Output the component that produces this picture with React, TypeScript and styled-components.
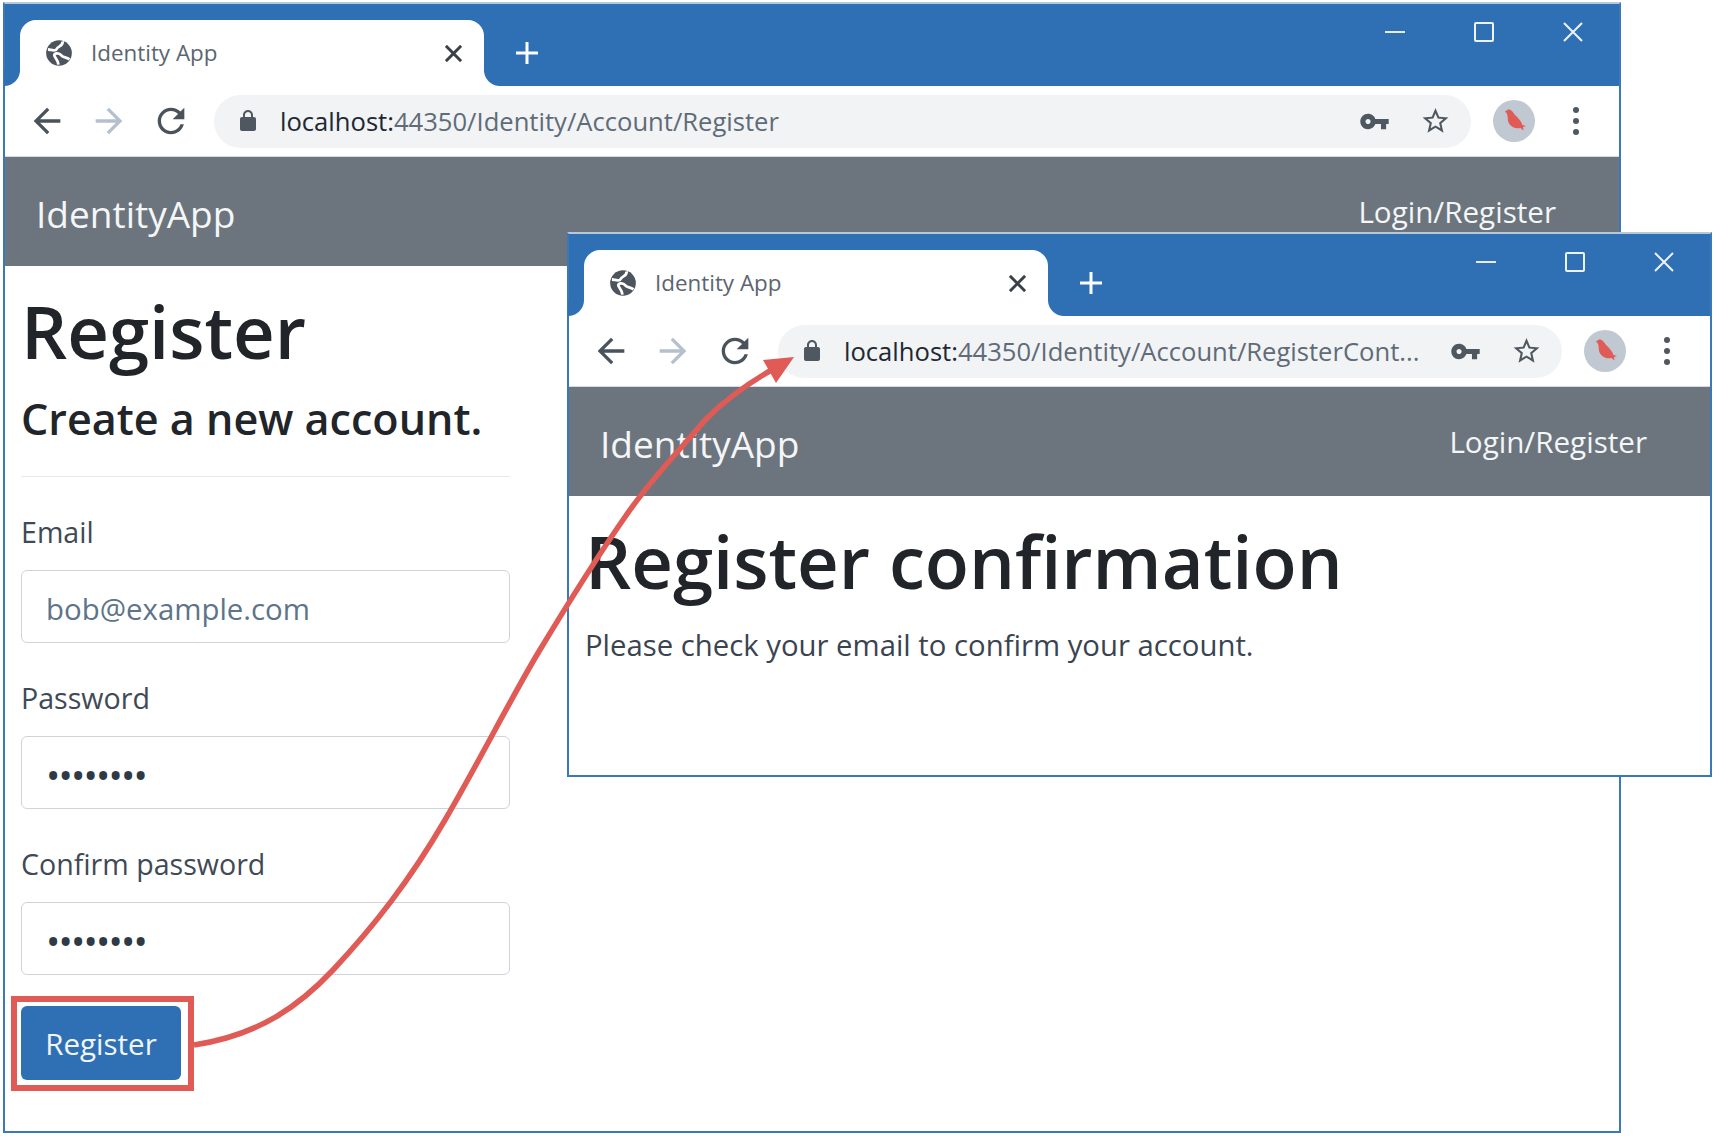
import React from "react";
import styled, { createGlobalStyle } from "styled-components";

const GlobalStyle = createGlobalStyle`
  html, body {
    margin: 0;
    padding: 0;
    background: #fff;
  }
  body {
    font-family: "Open Sans", "Noto Sans", sans-serif;
    color: #212529;
  }
`;

const BLUE = "#2f70b4";
const RED = "#e05b56";

const ICONS = {
  back: "M20 11H7.83l5.59-5.59L12 4l-8 8 8 8 1.41-1.41L7.83 13H20v-2z",
  forward: "M12 4l-1.41 1.41L16.17 11H4v2h12.17l-5.58 5.59L12 20l8-8z",
  reload:
    "M17.65 6.35C16.2 4.9 14.21 4 12 4c-4.42 0-7.99 3.58-7.99 8s3.57 8 7.99 8c3.73 0 6.84-2.55 7.73-6h-2.08c-.82 2.33-3.04 4-5.65 4-3.31 0-6-2.69-6-6s2.69-6 6-6c1.66 0 3.14.69 4.22 1.78L13 11h7V4l-2.35 2.35z",
  lock: "M18 8h-1V6c0-2.76-2.24-5-5-5S7 3.24 7 6v2H6c-1.1 0-2 .9-2 2v10c0 1.1.9 2 2 2h12c1.1 0 2-.9 2-2V10c0-1.1-.9-2-2-2zM9 6c0-1.66 1.34-3 3-3s3 1.34 3 3v2H9V6z",
  key: "M12.65 10C11.83 7.67 9.61 6 7 6c-3.31 0-6 2.69-6 6s2.69 6 6 6c2.61 0 4.83-1.67 5.65-4H17v4h4v-4h2v-4H12.65zM7 14c-1.1 0-2-.9-2-2s.9-2 2-2 2 .9 2 2-.9 2-2 2z",
  star: "M22 9.24l-7.19-.62L12 2 9.19 8.63 2 9.24l5.46 4.73L5.82 21 12 17.27 18.18 21l-1.63-7.03L22 9.24zM12 15.4l-3.76 2.27 1-4.28-3.32-2.88 4.38-.38L12 6.1l1.71 4.04 4.38.38-3.32 2.88 1 4.28L12 15.4z",
};

const Icon = ({ name, size, color }: { name: keyof typeof ICONS; size: number; color: string }) => (
  <svg width={size} height={size} viewBox="0 0 24 24" fill={color}>
    <path d={ICONS[name]} />
  </svg>
);

const Desktop = styled.div`
  position: relative;
  width: 1714px;
  height: 1136px;
  overflow: hidden;
  background: #fff;
`;

const Frame = styled.div<{ $left: number; $top: number; $width: number; $height: number }>`
  position: absolute;
  left: ${p => p.$left}px;
  top: ${p => p.$top}px;
  width: ${p => p.$width}px;
  height: ${p => p.$height}px;
  box-sizing: border-box;
  display: flex;
  flex-direction: column;
  background: #fff;
  border: 2px solid #3b78b8;
  border-top-color: #b9c8d9;
`;

const TitleBar = styled.div`
  flex: none;
  height: 82px;
  display: flex;
  padding: 0 2px 0 15px;
  background: ${BLUE};
`;

const Tab = styled.div`
  position: relative;
  align-self: flex-end;
  box-sizing: border-box;
  width: 464px;
  height: 66px;
  display: flex;
  align-items: center;
  gap: 18px;
  padding: 0 22px 0 25px;
  background: #fff;
  border-radius: 16px 16px 0 0;

  &::before,
  &::after {
    content: "";
    position: absolute;
    bottom: 0;
    width: 16px;
    height: 16px;
  }
  &::before {
    left: -16px;
    background: radial-gradient(circle at 0 0, ${BLUE} 15.5px, #fff 16.5px);
  }
  &::after {
    right: -16px;
    background: radial-gradient(circle at 100% 0, ${BLUE} 15.5px, #fff 16.5px);
  }
`;

const TabTitle = styled.span`
  flex: 1;
  padding-bottom: 2px;
  font-size: 22.4px;
  color: #5b6570;
  white-space: nowrap;
`;

const NewTab = styled.div`
  align-self: flex-end;
  width: 44px;
  height: 66px;
  margin-left: 21px;
  display: flex;
  align-items: center;
  justify-content: center;
`;

const WindowControls = styled.div`
  display: flex;
  margin-left: auto;
  align-self: flex-start;
`;

const WindowControl = styled.div`
  width: 89px;
  height: 56px;
  display: flex;
  align-items: center;
  justify-content: center;
`;

const Toolbar = styled.div`
  flex: none;
  height: 71px;
  box-sizing: border-box;
  display: flex;
  align-items: center;
  padding: 0 12px 0 11px;
  background: #fff;
  border-bottom: 1px solid #d5dbe2;
`;

const ToolButton = styled.div`
  flex: none;
  width: 62px;
  height: 62px;
  display: flex;
  align-items: center;
  justify-content: center;
`;

const Omnibox = styled.div`
  flex: 1;
  min-width: 0;
  height: 53px;
  margin: 0 12px 0 12px;
  box-sizing: border-box;
  display: flex;
  align-items: center;
  padding: 0 20px 0 22px;
  background: #f1f3f4;
  border-radius: 27px;
`;

const Url = styled.div`
  flex: 1;
  min-width: 0;
  margin-left: 20px;
  font-size: 25.6px;
  color: #5f6b78;
  white-space: nowrap;
`;

const UrlHost = styled.span`
  color: #202833;
`;

const OmniAction = styled.div`
  flex: none;
  width: 31px;
  margin-left: 30px;
  display: flex;
  justify-content: center;
`;

const Avatar = styled.div`
  width: 42px;
  height: 42px;
  border-radius: 50%;
  background: #c0c8d2;
  display: flex;
  align-items: center;
  justify-content: center;
`;

const MenuDots = styled.div`
  display: flex;
  flex-direction: column;
  gap: 5px;

  i {
    display: block;
    width: 6px;
    height: 6px;
    border-radius: 50%;
    background: #4f5761;
  }
`;

const NavBar = styled.div`
  flex: none;
  height: 109px;
  box-sizing: border-box;
  display: flex;
  align-items: center;
  justify-content: space-between;
  padding: 0 63px 0 31px;
  background: #6c757d;
  color: #f4f6f8;
`;

const Brand = styled.div`
  font-size: 37px;
  padding-top: 3px;
`;

const NavLink = styled.div`
  font-size: 29.6px;
`;

const Content = styled.div`
  flex: 1;
  padding: 0 16px;
  min-height: 0;
`;

const Heading = styled.h1`
  margin: 25px 0 0;
  font-size: 72.4px;
  line-height: 80px;
  font-weight: 600;
  color: #212529;
`;

const SubHeading = styled.h4`
  margin: 23px 0 0;
  font-size: 43.1px;
  line-height: 50px;
  font-weight: 600;
  color: #212529;
`;

const Rule = styled.hr`
  width: 489px;
  margin: 32px 0 35px;
  border: 0;
  border-top: 1px solid #e6e8ea;
`;

const Form = styled.form`
  width: 489px;
  display: flex;
  flex-direction: column;
`;

const Label = styled.label`
  display: block;
  margin-top: 35px;
  font-size: 28.6px;
  line-height: 40px;
  color: #3f4a56;

  &:first-child {
    margin-top: 0;
  }
`;

const Field = styled.input<{ $mask?: boolean }>`
  display: block;
  box-sizing: border-box;
  width: 489px;
  height: 73px;
  margin-top: 18px;
  padding: 4px 24px 0;
  font-family: inherit;
  font-size: ${p => (p.$mask ? 38 : 29.4)}px;
  letter-spacing: ${p => (p.$mask ? -1.8 : 0)}px;
  color: ${p => (p.$mask ? "#2f3a47" : "#5d7489")};
  background: #fff;
  border: 1.5px solid #ced4da;
  border-radius: 6px;
  outline: 0;
`;

const SubmitWrap = styled.div`
  position: relative;
  align-self: flex-start;
  margin-top: 31px;

  &::after {
    content: "";
    position: absolute;
    left: -10px;
    top: -10px;
    right: -13px;
    bottom: -11px;
    border: 6px solid ${RED};
  }
`;

const SubmitButton = styled.button`
  display: block;
  width: 160px;
  height: 74px;
  border: 0;
  border-radius: 6px;
  font-family: inherit;
  font-size: 29.5px;
  color: #f2f5f8;
  background: ${BLUE};
`;

const Message = styled.p`
  margin: 24px 0 0;
  font-size: 29.3px;
  line-height: 40px;
  color: #3a4450;
`;

const Overlay = styled.svg`
  position: absolute;
  left: 0;
  top: 0;
  pointer-events: none;
`;

const Favicon = () => (
  <svg width={28} height={28} viewBox="0 0 24 24" style={{ flex: "none" }}>
    <circle cx="12" cy="12" r="11" fill="#4d545e" />
    <path
      d="M15 2C16 6 11 6 10 8.5S5 9 2.500 9M21 17.500C18 15 16 16.500 14 14S8 12 8 14s3 3 3.500 8"
      fill="none"
      stroke="#fff"
      strokeWidth="2.400"
    />
  </svg>
);

const CloseGlyph = ({ size, stroke, weight }: { size: number; stroke: string; weight: number }) => (
  <svg width={size} height={size} viewBox="0 0 20 20" style={{ flex: "none" }}>
    <path d="M1 1L19 19M19 1L1 19" stroke={stroke} strokeWidth={weight} fill="none" />
  </svg>
);

const Bird = () => (
  <svg width={28} height={28} viewBox="0 0 28 28">
    <path
      d="M5 4.500L8 2.500C11 2 13 5 15 8C18 10.500 21 14 22.500 18L26 19L23 20L23.500 23.500L20.500 21C15 22.500 9.500 19 8 14C7.500 11 8 8 6.500 6Z"
      fill={RED}
    />
  </svg>
);

interface BrowserWindowProps {
  left: number;
  top: number;
  width: number;
  height: number;
  url: string;
  children: React.ReactNode;
}

const BrowserWindow: React.FunctionComponent<BrowserWindowProps> = props => {
  const host = "localhost:";
  return (
    <Frame $left={props.left} $top={props.top} $width={props.width} $height={props.height}>
      <TitleBar>
        <Tab>
          <Favicon />
          <TabTitle>Identity App</TabTitle>
          <CloseGlyph size={17} stroke="#3a4048" weight={3.5} />
        </Tab>
        <NewTab>
          <svg width={24} height={24} viewBox="0 0 24 24">
            <path d="M12 1V23M1 12H23" stroke="#fff" strokeWidth="3" fill="none" />
          </svg>
        </NewTab>
        <WindowControls>
          <WindowControl>
            <svg width={20} height={4} viewBox="0 0 20 4">
              <path d="M0 2H20" stroke="#e6edf5" strokeWidth="2" />
            </svg>
          </WindowControl>
          <WindowControl>
            <svg width={20} height={20} viewBox="0 0 20 20">
              <rect x="1" y="1" width="18" height="18" rx="1" stroke="#eef3f8" strokeWidth="2" fill="none" />
            </svg>
          </WindowControl>
          <WindowControl>
            <CloseGlyph size={20} stroke="#eef3f8" weight={2} />
          </WindowControl>
        </WindowControls>
      </TitleBar>
      <Toolbar>
        <ToolButton>
          <Icon name="back" size={40} color="#4a525c" />
        </ToolButton>
        <ToolButton>
          <Icon name="forward" size={40} color="#b4c0ce" />
        </ToolButton>
        <ToolButton>
          <Icon name="reload" size={40} color="#4a525c" />
        </ToolButton>
        <Omnibox>
          <Icon name="lock" size={24} color="#4f5761" />
          <Url>
            <UrlHost>{host}</UrlHost>
            {props.url}
          </Url>
          <OmniAction>
            <Icon name="key" size={31} color="#4f5761" />
          </OmniAction>
          <OmniAction>
            <Icon name="star" size={32} color="#4f5761" />
          </OmniAction>
        </Omnibox>
        <ToolButton>
          <Avatar>
            <Bird />
          </Avatar>
        </ToolButton>
        <ToolButton>
          <MenuDots>
            <i />
            <i />
            <i />
          </MenuDots>
        </ToolButton>
      </Toolbar>
      <NavBar>
        <Brand>IdentityApp</Brand>
        <NavLink>Login/Register</NavLink>
      </NavBar>
      <Content>{props.children}</Content>
    </Frame>
  );
};

const App = () => (
  <Desktop>
    <GlobalStyle />
    <BrowserWindow left={3} top={2} width={1618} height={1131} url="44350/Identity/Account/Register">
      <Heading>Register</Heading>
      <SubHeading>Create a new account.</SubHeading>
      <Rule />
      <Form>
        <Label>Email</Label>
        <Field readOnly value="bob@example.com" />
        <Label>Password</Label>
        <Field $mask readOnly type="password" value="password" />
        <Label>Confirm password</Label>
        <Field $mask readOnly type="password" value="password" />
        <SubmitWrap>
          <SubmitButton type="button">Register</SubmitButton>
        </SubmitWrap>
      </Form>
    </BrowserWindow>
    <BrowserWindow left={567} top={232} width={1145} height={545} url="44350/Identity/Account/RegisterCont...">
      <Heading>Register confirmation</Heading>
      <Message>Please check your email to confirm your account.</Message>
    </BrowserWindow>
    <Overlay width={1714} height={1136} viewBox="0 0 1714 1136">
      <path
        d="M194 1045C260 1035 300 1005 333 970C375 925 410 880 445 820C480 760 510 700 538 653C570 600 595 560 625 517C650 480 680 450 705 420C725 400 750 382 775 368"
        fill="none"
        stroke={RED}
        strokeWidth="5.500"
      />
      <path d="M794 357L763 360L776 383Z" fill={RED} />
    </Overlay>
  </Desktop>
);

export default App;
